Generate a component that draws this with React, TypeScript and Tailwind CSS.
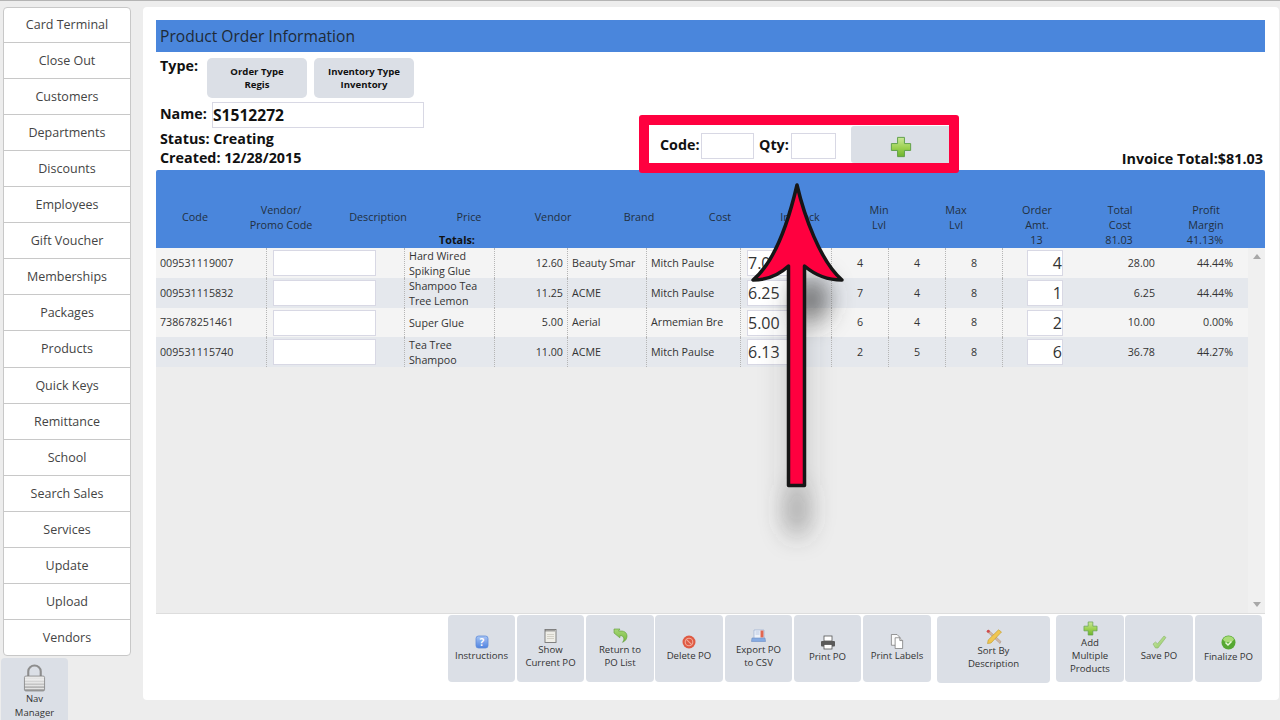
import type { ReactNode } from "react";

const navTop = ["Card Terminal", "Close Out", "Customers", "Departments", "Discounts", "Employees", "Gift Voucher", "Memberships", "Packages", "Products", "Quick Keys", "Remittance", "School", "Search Sales", "Services", "Update", "Upload", "Vendors"];

const headers = [
  { w: "w-[78px]", label: ["Code"] },
  { w: "w-[94px]", label: ["Vendor/", "Promo Code"] },
  { w: "w-[100px]", label: ["Description"] },
  { w: "w-[82px]", label: ["Price"] },
  { w: "w-[86px]", label: ["Vendor"] },
  { w: "w-[86px]", label: ["Brand"] },
  { w: "w-[76px]", label: ["Cost"] },
  { w: "w-[84px]", label: ["In Stock"] },
  { w: "w-[74px]", label: ["Min", "Lvl"] },
  { w: "w-[80px]", label: ["Max", "Lvl"] },
  { w: "w-[82px]", label: ["Order", "Amt."] },
  { w: "w-[84px]", label: ["Total", "Cost"] },
  { w: "w-[88px]", label: ["Profit", "Margin"] },
];

const rows = [
  { h: "h-[30px]", bg: "bg-[#f4f4f4]", code: "009531119007", desc: ["Hard Wired", "Spiking Glue"], price: "12.60", vendor: "Beauty Smar", brand: "Mitch Paulse", cost: "7.00", stock: "4", min: "4", max: "8", qty: "4", total: "28.00", margin: "44.44%" },
  { h: "h-[30px]", bg: "bg-[#e5e8ed]", code: "009531115832", desc: ["Shampoo Tea", "Tree Lemon"], price: "11.25", vendor: "ACME", brand: "Mitch Paulse", cost: "6.25", stock: "7", min: "4", max: "8", qty: "1", total: "6.25", margin: "44.44%" },
  { h: "h-[29px]", bg: "bg-[#f4f4f4]", code: "738678251461", desc: ["Super Glue"], price: "5.00", vendor: "Aerial", brand: "Armemian Bre", cost: "5.00", stock: "6", min: "4", max: "8", qty: "2", total: "10.00", margin: "0.00%" },
  { h: "h-[30px]", bg: "bg-[#e5e8ed]", code: "009531115740", desc: ["Tea Tree", "Shampoo"], price: "11.00", vendor: "ACME", brand: "Mitch Paulse", cost: "6.13", stock: "2", min: "5", max: "8", qty: "6", total: "36.78", margin: "44.27%" },
];

const Dotted = "border-r border-dotted border-[#b5b5b5]";

function IconHelp() {
  return (
    <svg width="14" height="14" viewBox="0 0 14 14">
      <defs>
        <linearGradient id="help" x1="0" y1="0" x2="0" y2="1">
          <stop offset="0" stopColor="#a9c6f5" />
          <stop offset="1" stopColor="#4f83e0" />
        </linearGradient>
      </defs>
      <rect x="1" y="1" width="12" height="12" rx="2.500" fill="url(#help)" stroke="#5f8cd8" strokeWidth=".8" />
      <text x="7" y="10.800" textAnchor="middle" fontSize="10" fontWeight="700" fill="#fff" fontFamily="Open Sans">?</text>
    </svg>
  );
}

function IconNote() {
  return (
    <svg width="13" height="15" viewBox="0 0 13 15">
      <rect x="1" y="1.500" width="11" height="13" fill="#efeee8" stroke="#777" strokeWidth=".9" />
      <path d="M1.500 2.800h10" stroke="#555" strokeDasharray="1 1" strokeWidth="1.600" />
      <path d="M3 6.500h7M3 8.500h7M3 10.500h7" stroke="#d2d0c6" />
    </svg>
  );
}

function IconReturn() {
  return (
    <svg width="15" height="15" viewBox="0 0 15 15">
      <defs>
        <linearGradient id="back" x1="0" y1="0" x2="0" y2="1">
          <stop offset="0" stopColor="#a7d778" />
          <stop offset="1" stopColor="#74b83c" />
        </linearGradient>
      </defs>
      <path d="M1 1h6L5.500 3H8c4 0 6 2.200 6 5.300 0 2.500-1.700 5-4.500 6 1.300-1.500 1.700-3 1.200-4.300C10.200 8.500 9 7.500 7.200 7.500L6.800 9.800 1 5Z" fill="url(#back)" stroke="#5e9b35" strokeWidth=".6" />
    </svg>
  );
}

function IconDelete() {
  return (
    <svg width="14" height="14" viewBox="0 0 14 14">
      <circle cx="7" cy="7" r="6.500" fill="#df5a43" />
      <circle cx="7" cy="7" r="3.800" fill="none" stroke="#f2ab9b" strokeWidth="1.100" />
      <path d="M4.300 4.300l5.400 5.400" stroke="#f2ab9b" strokeWidth="1.100" />
    </svg>
  );
}

function IconExport() {
  return (
    <svg width="15" height="14" viewBox="0 0 15 14">
      <path d="M3 1h10v9H3Z" fill="#eef2f9" stroke="#8ea5cc" strokeWidth=".6" />
      <path d="M9.500 1.500h3v7h-3Z" fill="#e2664f" />
      <path d="M4.500 3h4M4.500 5h4" stroke="#a9bcdc" strokeWidth=".8" />
      <path d="M1 9h13l.5 3.500H.5Z" fill="#86abe3" stroke="#6b8dc4" strokeWidth=".6" />
    </svg>
  );
}

function IconPrint() {
  return (
    <svg width="16" height="15" viewBox="0 0 16 15">
      <rect x="4" y="1" width="8" height="5" fill="#fff" stroke="#555" strokeWidth=".8" />
      <rect x="1" y="6" width="14" height="5.500" rx="1" fill="#5a5a5a" />
      <rect x="4" y="9.500" width="8" height="4.500" fill="#fff" stroke="#555" strokeWidth=".8" />
    </svg>
  );
}

function IconLabels() {
  return (
    <svg width="14" height="15" viewBox="0 0 14 16">
      <path d="M1 .5h6l3 3V12H1Z" fill="#fafafa" stroke="#777" strokeWidth=".8" />
      <path d="M5 4h5l3 3v8.500H5Z" fill="#fff" stroke="#777" strokeWidth=".8" />
      <path d="M10 4v3h3" fill="#ddd" stroke="#777" strokeWidth=".8" />
    </svg>
  );
}

function IconSort() {
  return (
    <svg width="16" height="15" viewBox="0 0 16 15">
      <path d="M1 2.500L2.500 1 15 12.500 14 14.500Z" fill="#d1b8a4" stroke="#a68c7c" strokeWidth=".5" />
      <circle cx="2.300" cy="2.300" r="1.500" fill="#d14b4b" />
      <path d="M12.500 .8L15.500 3 5 14l-3.500.6L2.200 11Z" fill="#f0c650" stroke="#c09a2c" strokeWidth=".6" />
    </svg>
  );
}

function IconPlus({ size = 15, id = "plus" }: { size?: number; id?: string }) {
  return (
    <svg width={size} height={size} viewBox="0 0 16 16">
      <defs>
        <linearGradient id={id} x1="0" y1="0" x2="0" y2="1">
          <stop offset="0" stopColor="#cbe89a" />
          <stop offset=".55" stopColor="#9bd04f" />
          <stop offset="1" stopColor="#6db32f" />
        </linearGradient>
      </defs>
      <path d="M5.500 1h5v4.500H15v5h-4.500V15h-5v-4.500H1v-5h4.500Z" fill={`url(#${id})`} stroke="#5f9f48" strokeWidth=".7" />
    </svg>
  );
}

function IconSave() {
  return (
    <svg width="15" height="14" viewBox="0 0 15 14">
      <defs>
        <linearGradient id="save" x1="0" y1="0" x2="1" y2="1">
          <stop offset="0" stopColor="#d2ecb2" />
          <stop offset="1" stopColor="#8cc65c" />
        </linearGradient>
      </defs>
      <path d="M1 9l2.500-2 2 1.800L12 1l2 1.500L6 13H3.500Z" fill="url(#save)" stroke="#8ab66a" strokeWidth=".6" />
    </svg>
  );
}

function IconFinalize() {
  return (
    <svg width="15" height="15" viewBox="0 0 15 15">
      <circle cx="7.500" cy="7.500" r="7" fill="#56a832" />
      <ellipse cx="7.500" cy="4.300" rx="5.200" ry="3" fill="#a9dc78" />
      <path d="M4.500 7.500l2.500 2.500 3.500-3.500" fill="none" stroke="#e9f8da" strokeWidth="1.500" />
    </svg>
  );
}

function IconLock() {
  return (
    <svg width="23" height="28" viewBox="0 0 24 28">
      <defs>
        <linearGradient id="lock" x1="0" y1="0" x2="0" y2="1">
          <stop offset="0" stopColor="#f0f0f0" />
          <stop offset="1" stopColor="#a4a4a4" />
        </linearGradient>
      </defs>
      <path d="M5.500 13V7a6.500 6 0 0 1 13 0v6" fill="none" stroke="#8d8d8d" strokeWidth="2.200" />
      <rect x="1.500" y="12" width="21" height="15.500" rx="1.500" fill="url(#lock)" stroke="#7d7d7d" strokeWidth=".8" />
      <path d="M2 16h20M2 19h20M2 22h20M2 25h20" stroke="#fff" strokeOpacity=".7" />
    </svg>
  );
}

type Tool = { label: string[]; icon: ReactNode; w: string; cls?: string };

const tools: Tool[] = [
  { label: ["Instructions"], icon: <IconHelp />, w: "w-[67px] mr-[2px]" },
  { label: ["Show", "Current PO"], icon: <IconNote />, w: "w-[67px] mr-[2px]" },
  { label: ["Return to", "PO List"], icon: <IconReturn />, w: "w-[68px] mr-[1px]" },
  { label: ["Delete PO"], icon: <IconDelete />, w: "w-[68px] mr-[2px]" },
  { label: ["Export PO", "to CSV"], icon: <IconExport />, w: "w-[67px] mr-[2px]" },
  { label: ["Print PO"], icon: <IconPrint />, w: "w-[67px] mr-[2px]" },
  { label: ["Print Labels"], icon: <IconLabels />, w: "w-[68px] mr-[6px]", cls: "pb-[2px]" },
  { label: ["Sort By", "Description"], icon: <IconSort />, w: "w-[113px] mr-[6px]", cls: "mt-px" },
  { label: ["Add", "Multiple", "Products"], icon: <IconPlus />, w: "w-[68px] mr-px", cls: "pb-[2px]" },
  { label: ["Save PO"], icon: <IconSave />, w: "w-[68px] mr-[2px]" },
  { label: ["Finalize PO"], icon: <IconFinalize />, w: "w-[67px]" },
];

function Arrow() {
  return (
    <svg className="absolute left-0 top-0 pointer-events-none" width="1280" height="720" viewBox="0 0 1280 720">
      <defs>
        <filter id="soft" x="-150%" y="-150%" width="400%" height="400%">
          <feGaussianBlur stdDeviation="12" />
        </filter>
      </defs>
      <g filter="url(#soft)" fill="#444">
        <ellipse cx="811" cy="298" rx="18" ry="22" opacity=".75" />
        <rect x="782" y="310" width="30" height="180" opacity=".16" />
        <ellipse cx="797" cy="510" rx="13" ry="26" opacity=".42" />
      </g>
      <path
        d="M797 184C790 214 776 260 753 279C767 279 779 274 788.500 265V484.500H804.500V265C815 274 828 279 842 279C820 260 804 214 797 184Z"
        fill="#ff003f"
        stroke="#161616"
        strokeWidth="3.500"
        strokeLinejoin="round"
      />
    </svg>
  );
}

export default function App() {
  return (
    <div className="relative flex h-[720px] w-[1280px] overflow-hidden border-t border-[#b4b4b4] bg-[#ededed] font-['Open_Sans',sans-serif] text-[#333]">
      <aside className="w-[143px] shrink-0 pt-[6px]">
        <nav className="ml-[3px] w-[128px] overflow-hidden rounded-[4px] border border-[#c8c8c8] bg-white">
          {navTop.map((item, i) => (
            <div
              key={item}
              className={`flex items-center justify-center border-b border-[#c8c8c8] text-[12.5px] text-[#444] last:border-b-0 ${item === "Products" ? "h-[37px]" : i === 0 ? "h-[35px]" : item === "Vendors" ? "h-[35px] pt-[2px]" : "h-[36px] pt-[2px]"}`}
            >
              {item}
            </div>
          ))}
        </nav>
        <div className="ml-px mt-[2px] flex h-[62px] w-[67px] flex-col items-center rounded-t-[4px] bg-[#dbdfe6] pt-[6px] text-center text-[9.5px] leading-[14px]">
          <IconLock />
          <span>Nav</span>
          <span>Manager</span>
        </div>
      </aside>

      <main className="mb-[20px] mr-px mt-[6px] flex w-[1136px] flex-col rounded-[4px] bg-white px-[13px] pt-[13px]">
        <h1 className="flex h-[32px] w-[1109px] shrink-0 items-center bg-[#4a86dc] pl-[4px] pt-[2px] text-[15.6px] text-[#1f2a36]">Product Order Information</h1>

        <div className="flex h-[118px] w-[1109px] shrink-0 text-[14.3px] font-bold leading-[19px] text-[#111]">
          <div className="w-[493px] shrink-0 pl-[4px] pt-[6px]">
            <div className="flex">
              <span className="-mt-[2px] w-[47px]">Type:</span>
              <div className="flex h-[40px] w-[100px] flex-col items-center justify-center rounded-[5px] bg-[#dbdfe6] text-[9.6px] leading-[13px]">
                <span>Order Type</span>
                <span>Regis</span>
              </div>
              <div className="ml-[7px] flex h-[40px] w-[100px] flex-col items-center justify-center rounded-[5px] bg-[#dbdfe6] text-[9.6px] leading-[13px]">
                <span>Inventory Type</span>
                <span>Inventory</span>
              </div>
            </div>
            <div className="mt-[4px] flex h-[26px] items-center">
              <span className="w-[52px] pb-[4px]">Name:</span>
              <div className="flex h-[26px] w-[212px] items-center border border-[#d8d8e4] text-[15.6px] text-[#111]">S1512272</div>
            </div>
            <div className="mt-[1px]">Status: Creating</div>
            <div>Created: 12/28/2015</div>
          </div>

          <div className="relative mt-[73px] flex h-[38px] w-[300px] shrink-0 items-start pl-[11px] pt-[8px]">
            <span className="mt-[2px] w-[41px]">Code:</span>
            <div className="h-[26px] w-[53px] border border-[#d8d8e4] bg-white" />
            <span className="ml-[5px] mt-[2px] w-[32px]">Qty:</span>
            <div className="h-[26px] w-[45px] border border-[#d8d8e4] bg-white" />
            <div className="absolute right-0 top-px flex h-[37px] w-[98px] items-center justify-center rounded-l-[3px] bg-[#dbdfe6] pl-[2px] pt-[4px]">
              <IconPlus size={22} id="plus-add" />
            </div>
            <div className="pointer-events-none absolute -inset-[10px] rounded-[3px] border-[10px] border-[#ff003f]" />
          </div>

          <div className="flex flex-1 items-end justify-end pb-[2px] pr-[2px] text-[14.4px]">Invoice Total:$81.03</div>
        </div>

        <div className="h-[78px] w-[1109px] shrink-0 rounded-t-[2px] bg-[#4a86dc] pt-[32px] text-[10.8px] leading-[15px] text-[#22303f]">
          <div className="flex h-[30px]">
            {headers.map((h) => (
              <div key={h.label.join()} className={`${h.w} ${h.label.length === 1 ? "pb-[2px]" : ""} flex shrink-0 flex-col items-center justify-center`}>
                {h.label.map((l) => (
                  <span key={l}>{l}</span>
                ))}
              </div>
            ))}
          </div>
          <div className="flex h-[15px]">
            <div className="w-[283px]" />
            <div className="w-[65px] font-bold text-[#111]">Totals:</div>
            <div className="w-[492px]" />
            <div className="w-[81px] text-center">13</div>
            <div className="w-[84px] text-center">81.03</div>
            <div className="w-[88px] text-center">41.13%</div>
          </div>
        </div>

        <div className="flex h-[366px] w-[1109px] shrink-0 border-b border-[#dddddd] bg-[#ededed] text-[10.7px] leading-[15px] text-[#333]">
          <div className="w-[1092px] shrink-0">
            {rows.map((r) => (
              <div key={r.code} className={`flex ${r.h} ${r.bg}`}>
                <div className={`flex w-[111px] shrink-0 items-center pl-[4px] ${Dotted}`}>{r.code}</div>
                <div className={`w-[138px] shrink-0 pl-[6px] pt-[2px] ${Dotted}`}>
                  <div className="h-[26px] w-[103px] border border-[#d8d8e4] bg-white" />
                </div>
                <div className={`flex w-[90px] shrink-0 flex-col justify-center pl-[4px] pt-[2px] ${Dotted}`}>
                  {r.desc.map((d) => (
                    <span key={d}>{d}</span>
                  ))}
                </div>
                <div className={`flex w-[73px] shrink-0 items-center justify-end pr-[4px] ${Dotted}`}>{r.price}</div>
                <div className={`flex w-[79px] shrink-0 items-center pl-[4px] ${Dotted}`}>{r.vendor}</div>
                <div className={`flex w-[94px] shrink-0 items-center pl-[4px] ${Dotted}`}>{r.brand}</div>
                <div className={`w-[91px] shrink-0 pl-[6px] pt-[2px] ${Dotted}`}>
                  <div className="flex h-[26px] w-[50px] items-center border border-[#d8d8e4] bg-white text-[16px]">{r.cost}</div>
                </div>
                <div className={`flex w-[57px] shrink-0 items-center justify-center ${Dotted}`}>{r.stock}</div>
                <div className={`flex w-[57px] shrink-0 items-center justify-center ${Dotted}`}>{r.min}</div>
                <div className={`flex w-[57px] shrink-0 items-center justify-center ${Dotted}`}>{r.max}</div>
                <div className="w-[85px] shrink-0 pl-[24px] pt-[2px]">
                  <div className="flex h-[26px] w-[36px] items-center justify-end border border-[#d8d8e4] bg-white text-[16px]">{r.qty}</div>
                </div>
                <div className="flex w-[67px] shrink-0 items-center justify-end">{r.total}</div>
                <div className="flex w-[78px] shrink-0 items-center justify-end">{r.margin}</div>
              </div>
            ))}
          </div>
          <div className="flex flex-1 flex-col items-center justify-between bg-[#f0f0f0] py-[6px]">
            <div className="h-0 w-0 border-x-[4px] border-b-[5px] border-x-transparent border-b-[#a8a8a8]" />
            <div className="h-0 w-0 border-x-[4px] border-t-[5px] border-x-transparent border-t-[#a8a8a8]" />
          </div>
        </div>

        <div className="ml-[292px] mt-px flex items-start">
          {tools.map((t) => (
            <div key={t.label.join()} className={`${t.w} ${t.cls ?? ""} flex h-[67px] shrink-0 flex-col items-center justify-center rounded-[4px] bg-[#dbdfe6] text-center text-[9.6px] leading-[13px]`}>
              {t.icon}
              {t.label.map((l) => (
                <span key={l}>{l}</span>
              ))}
            </div>
          ))}
        </div>
      </main>
      <Arrow />
    </div>
  );
}
